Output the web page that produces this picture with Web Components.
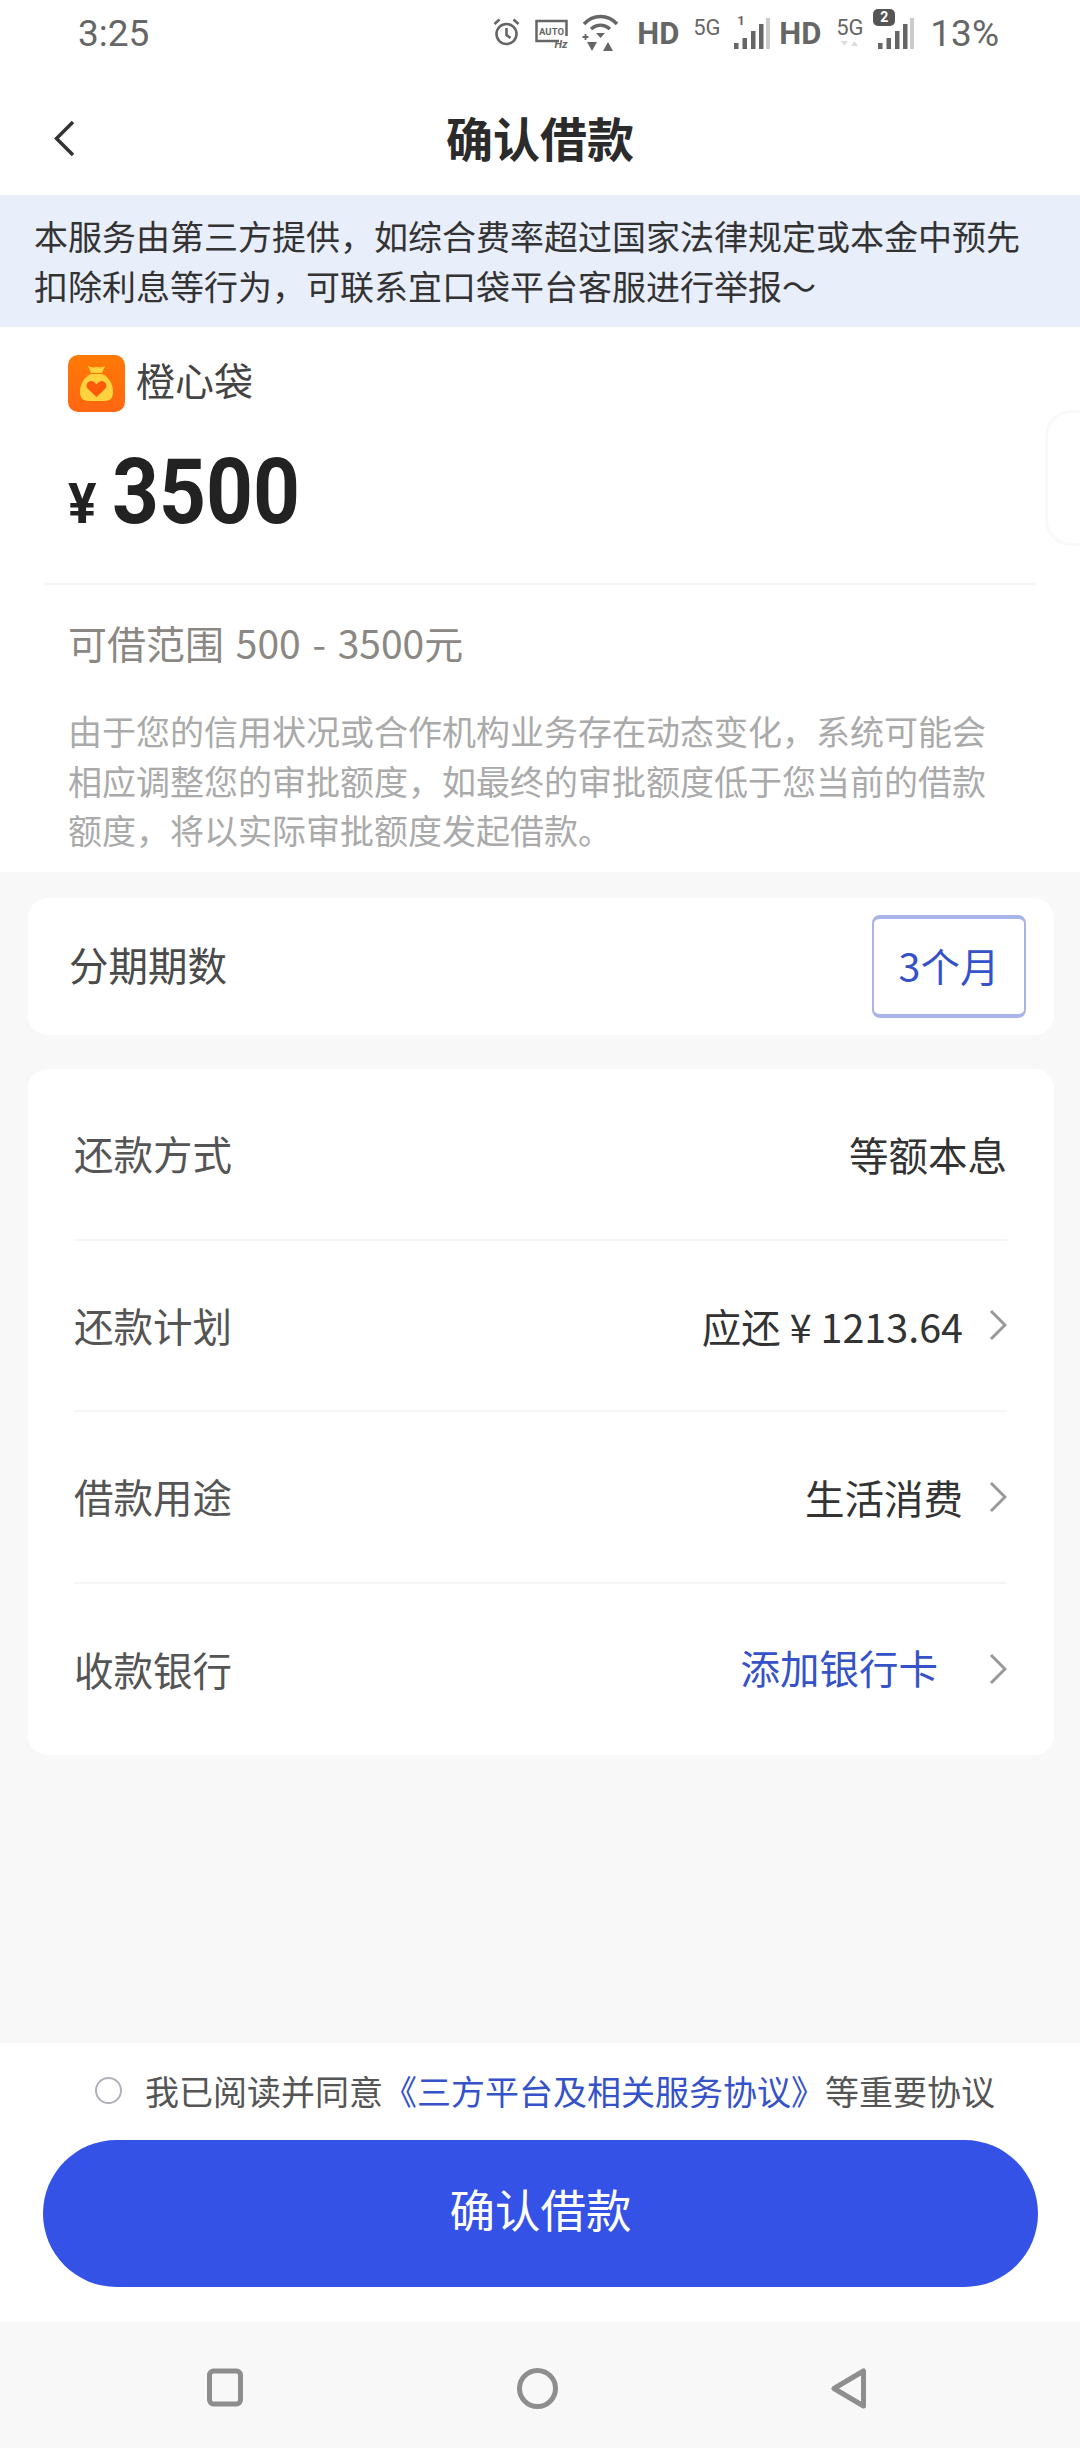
<!DOCTYPE html>
<html lang="zh">
<head>
<meta charset="utf-8">
<style>
  html, body { margin: 0; padding: 0; }
  body {
    width: 1080px;
    height: 2448px;
    overflow: hidden;
    background: #f8f8f8;
    font-family: "Noto Sans CJK SC", "Roboto", sans-serif;
    display: flex;
    flex-direction: column;
  }
</style>
</head>
<body>
  <status-bar></status-bar>
  <title-bar>确认借款</title-bar>
  <notice-bar>本服务由第三方提供，如综合费率超过国家法律规定或本金中预先扣除利息等行为，可联系宜口袋平台客服进行举报～</notice-bar>
  <amount-panel name="橙心袋" amount="3500" range="可借范围 500 - 3500元">由于您的信用状况或合作机构业务存在动态变化，系统可能会相应调整您的审批额度，如最终的审批额度低于您当前的借款额度，将以实际审批额度发起借款。</amount-panel>
  <term-card label="分期期数" value="3个月"></term-card>
  <info-card>
    <info-row label="还款方式" value="等额本息"></info-row>
    <info-row label="还款计划" value="应还 ¥ 1213.64" arrow></info-row>
    <info-row label="借款用途" value="生活消费" arrow></info-row>
    <info-row label="收款银行" value="添加银行卡" arrow link last></info-row>
  </info-card>
  <confirm-footer label="确认借款"></confirm-footer>
  <nav-bar></nav-bar>

<script>
'use strict';

class StatusBar extends HTMLElement {
  constructor() {
    super();
    this.attachShadow({mode: 'open'});
    const bars = `
      <svg width="36" height="31" viewBox="0 0 36 31" fill="#666">
        <rect x="0" y="25" width="4.500" height="6"/>
        <rect x="8.500" y="20" width="4.500" height="11"/>
        <rect x="17" y="13" width="4.500" height="18"/>
        <rect x="25" y="6" width="4.500" height="25"/>
        <rect x="32" y="0" width="4" height="31" fill="#ccc"/>
      </svg>`;
    this.shadowRoot.innerHTML = `
      <style>
        :host {
          display: flex;
          align-items: center;
          height: 80px;
          box-sizing: border-box;
          padding: 0 81px 14px 78px;
          background: #fff;
          color: #666;
          font-family: "Roboto", sans-serif;
        }
        .time { font-size: 37px; flex: 1; }
        .icons { display: flex; align-items: center; }
        .hd { font-size: 31px; font-weight: 700; width: 40px; text-align: center; white-space: nowrap; display: flex; justify-content: center; }
        .g5 { font-size: 22px; width: 27px; display: flex; justify-content: center; margin-top: -12px; position: relative; }
        .pct { font-size: 37px; margin-left: 16px; }
        .sig { position: relative; display: block; width: 36px; height: 31px; }
        .one { position: absolute; left: 3px; top: -4px; font-size: 13px; font-weight: 700; line-height: 13px; }
        .two { position: absolute; left: -5px; top: -9px; width: 22px; height: 17px; border-radius: 5px; background: #555; color: #fff; font-size: 14px; font-weight: 700; text-align: center; line-height: 17px; }
        .arrows { position: absolute; left: 5px; top: 26px; }
        svg { display: block; }
      </style>
      <span class="time">3:25</span>
      <div class="icons">
        <svg style="margin-top:-3px" width="27" height="28" viewBox="0 0 27 28" fill="none" stroke="#666" stroke-width="2.600">
          <circle cx="13.500" cy="16" r="10"/><path d="M13.500 10v7l4 3M1.500 6l5-4.500M25.500 6l-5-4.500"/>
        </svg>
        <svg style="margin-left:15px" width="33" height="36" viewBox="0 0 33 36" fill="none">
          <path d="M24 26H1.500V6h30v15" stroke="#666" stroke-width="2.500"/>
          <text x="16.500" y="19.500" font-family="Roboto" font-size="9.500" font-weight="700" fill="#666" text-anchor="middle">AUTO</text>
          <text x="26" y="33" font-family="Roboto" font-size="11" font-weight="700" font-style="italic" fill="#666" text-anchor="middle">Hz</text>
        </svg>
        <svg style="margin-left:14px" width="37" height="39" viewBox="0 0 37 39" fill="none" stroke="#666">
          <path d="M2 10C11 0 26 0 35 10" stroke-width="3.400"/>
          <path d="M9 15c6-5 13-5 19 0" stroke-width="3.400"/>
          <path d="M14 19h9l-4.500 5z" fill="#666" stroke="none"/>
          <path d="M.5 23h6M3.500 20v6" stroke-width="1.800"/>
          <path d="M5 28h10l-5 9zM21 37h10l-5-9z" fill="#666" stroke="none"/>
        </svg>
        <span class="hd" style="margin-left:19px">HD</span>
        <span class="g5" style="margin-left:15px">5G</span>
        <span class="sig" style="margin-left:14px">${bars}<span class="one">1</span></span>
        <span class="hd" style="margin-left:10px">HD</span>
        <span class="g5" style="margin-left:16px">5G
          <svg class="arrows" width="17" height="5" viewBox="0 0 17 5" fill="#ddd"><path d="M0 0h7L3.500 5zM10 5h7l-3.500-5z"/></svg>
        </span>
        <span class="sig" style="margin-left:15px">${bars}<span class="two">2</span></span>
        <span class="pct">13%</span>
      </div>
    `;
  }
}

class TitleBar extends HTMLElement {
  constructor() {
    super();
    this.attachShadow({mode: 'open'});
    this.shadowRoot.innerHTML = `
      <style>
        :host {
          display: flex;
          align-items: center;
          justify-content: center;
          position: relative;
          height: 115px;
          box-sizing: border-box;
          padding-bottom: 3px;
          background: #fff;
          color: #2b2b2b;
          font-size: 47px;
          font-weight: 700;
        }
        svg { position: absolute; left: 50px; top: 38px; }
      </style>
      <svg width="32" height="42" viewBox="0 0 32 42" fill="none" stroke="#333" stroke-width="3.500">
        <path d="M23 4 6.500 20.500 23 37"/>
      </svg>
      <slot></slot>
    `;
  }
}

class NoticeBar extends HTMLElement {
  constructor() {
    super();
    this.attachShadow({mode: 'open'});
    this.shadowRoot.innerHTML = `
      <style>
        :host {
          display: block;
          height: 132px;
          box-sizing: border-box;
          padding: 16px 34px 0 34px;
          background: #e9eefb;
          color: #333;
          font-size: 34px;
          line-height: 50px;
        }
      </style>
      <slot></slot>
    `;
  }
}

class AmountPanel extends HTMLElement {
  constructor() {
    super();
    this.attachShadow({mode: 'open'});
    this.shadowRoot.innerHTML = `
      <style>
        :host {
          display: block;
          position: relative;
          height: 545px;
          box-sizing: border-box;
          padding: 28px 45px 0 45px;
          background: #fff;
          margin-bottom: 26px;
        }
        .brand { display: flex; gap: 11px; height: 56px; font-size: 39px; line-height: 48px; color: #444; margin-left: 23px; }
        .brand svg { flex: none; }
        .amount { display: flex; align-items: baseline; box-sizing: border-box; padding-top: 6px; margin: 30px 0 0 23px; height: 102px; line-height: 1; color: #222; font-family: "Roboto", sans-serif; font-weight: 700; }
        .yen { display: inline-block; width: 32px; margin-right: 12px; font-size: 56px; transform: scaleX(.95); transform-origin: left; }
        .num { display: inline-block; font-size: 91px; transform: scaleX(.9); transform-origin: left; }
        hr { border: 0; border-top: 2px solid #f4f4f4; margin: 40px 0 0 0; }
        .range { font-size: 39px; word-spacing: 3px; color: #8b8884; margin: 29px 0 0 23px; height: 56px; line-height: 56px; }
        .note { font-size: 34px; line-height: 49.500px; color: #aaa; margin: 36px 30px 0 23px; }
        .peek {
          position: absolute;
          left: 1045px;
          top: 83px;
          width: 60px;
          height: 130px;
          border: 3px solid #f9f9f9;
          border-radius: 26px;
        }
      </style>
      <div class="brand">
        <svg width="57" height="57" viewBox="0 0 57 57">
          <defs><linearGradient id="o" x1="0" y1="0" x2="0" y2="1"><stop offset="0" stop-color="#ff7a06"/><stop offset="1" stop-color="#ff6612"/></linearGradient></defs>
          <rect width="57" height="57" rx="10" fill="url(#o)"/>
          <path d="M20 11c3 1 5 2 8.500 1 3.500 1 5.500 0 8.500-1l-3 7H23z" fill="#ffd23e"/>
          <path d="M23 19h11c7 3 11 10 11 18 0 7-4 9-9 9H21c-5 0-9-2-9-9 0-8 4-15 11-18z" fill="#ffd23e"/>
          <path d="M28.500 42 20 34c-4-4 1-9.500 5-7.500 2 1 3 2 3.500 3 .5-1 1.500-2 3.500-3 4-2 9 3.500 5 7.500z" fill="#ff5a0a"/>
        </svg>
        <span id="name"></span>
      </div>
      <div class="amount"><span class="yen">¥</span><span class="num" id="num"></span></div>
      <hr>
      <div class="range" id="range"></div>
      <div class="note"><slot></slot></div>
      <div class="peek"></div>
    `;
  }
  connectedCallback() {
    this.shadowRoot.getElementById('name').textContent = this.getAttribute('name');
    this.shadowRoot.getElementById('num').textContent = this.getAttribute('amount');
    this.shadowRoot.getElementById('range').textContent = this.getAttribute('range');
  }
}

class TermCard extends HTMLElement {
  constructor() {
    super();
    this.attachShadow({mode: 'open'});
    this.shadowRoot.innerHTML = `
      <style>
        :host {
          display: flex;
          align-items: center;
          justify-content: space-between;
          height: 137px;
          box-sizing: border-box;
          margin: 0 26px 34px 28px;
          padding: 0 28px 0 41px;
          background: #fff;
          border-radius: 20px;
          font-size: 39.500px;
          color: #4a4a4a;
        }
        #label { margin-top: -6px; }
        .chip {
          display: flex;
          align-items: center;
          justify-content: center;
          width: 154px;
          height: 103px;
          box-sizing: border-box;
          padding-bottom: 5px;
          border: solid #a9b5ea;
          border-width: 4px 2px;
          border-radius: 8px;
          color: #3552c8;
        }
      </style>
      <span id="label"></span>
      <span class="chip" id="value"></span>
    `;
  }
  connectedCallback() {
    this.shadowRoot.getElementById('label').textContent = this.getAttribute('label');
    this.shadowRoot.getElementById('value').textContent = this.getAttribute('value');
  }
}

class InfoCard extends HTMLElement {
  constructor() {
    super();
    this.attachShadow({mode: 'open'});
    this.shadowRoot.innerHTML = `
      <style>
        :host {
          display: block;
          margin: 0 26px 0 28px;
          padding: 0 47px 0 46px;
          background: #fff;
          border-radius: 20px;
        }
      </style>
      <slot></slot>
    `;
  }
}

class InfoRow extends HTMLElement {
  constructor() {
    super();
    this.attachShadow({mode: 'open'});
    this.shadowRoot.innerHTML = `
      <style>
        :host {
          display: flex;
          align-items: center;
          height: 171.500px;
          box-sizing: border-box;
          border-bottom: 2px solid #f5f5f5;
          font-size: 39.500px;
          color: #333;
        }
        :host([last]) { border-bottom: 0; }
        :host([link]) .value { color: #3552c8; margin-bottom: 6px; }
        .label { flex: 1; color: #555; margin-bottom: 2px; }
        svg { margin-left: 26px; display: none; }
        :host([arrow]) svg { display: block; }
        :host([link]) svg { margin-left: 51px; }
      </style>
      <span class="label" id="label"></span>
      <span class="value" id="value"></span>
      <svg width="18" height="32" viewBox="0 0 18 32" fill="none" stroke="#999" stroke-width="3">
        <path d="M2 2l14 14L2 30"/>
      </svg>
    `;
  }
  connectedCallback() {
    this.shadowRoot.getElementById('label').textContent = this.getAttribute('label');
    this.shadowRoot.getElementById('value').textContent = this.getAttribute('value');
  }
}

class ConfirmFooter extends HTMLElement {
  constructor() {
    super();
    this.attachShadow({mode: 'open'});
    this.shadowRoot.innerHTML = `
      <style>
        :host {
          display: block;
          margin-top: auto;
          height: 279px;
          box-sizing: border-box;
          padding: 20px 42px 0 43px;
          background: #fff;
        }
        .agree {
          display: flex;
          align-items: center;
          justify-content: center;
          height: 54px;
          padding-left: 9px;
          font-size: 34px;
          color: #555;
          white-space: nowrap;
        }
        .dot {
          flex: none;
          width: 27px;
          height: 27px;
          box-sizing: border-box;
          border: 2px solid #b0b0bc;
          border-radius: 50%;
          margin-right: 23px;
        }
        a { color: #3552c8; }
        button {
          display: block;
          width: 100%;
          height: 147px;
          margin-top: 23px;
          padding: 0 0 12px;
          border: 0;
          border-radius: 74px;
          background: #3552e6;
          color: #fff;
          font: inherit;
          font-size: 45.500px;
        }
      </style>
      <div class="agree"><span class="dot"></span><span>我已阅读并同意<a>《三方平台及相关服务协议》</a>等重要协议</span></div>
      <button id="btn"></button>
    `;
  }
  connectedCallback() {
    this.shadowRoot.getElementById('btn').textContent = this.getAttribute('label');
  }
}

class NavBar extends HTMLElement {
  constructor() {
    super();
    this.attachShadow({mode: 'open'});
    this.shadowRoot.innerHTML = `
      <style>
        :host {
          display: block;
          height: 126px;
          background: #f8f8f8;
          position: relative;
        }
        svg { position: absolute; top: 46px; }
      </style>
      <svg style="left:207px" width="36" height="39" viewBox="0 0 36 39" fill="none" stroke="#8e8e8e" stroke-width="5">
        <rect x="2.500" y="3" width="31" height="33" rx="4"/>
      </svg>
      <svg style="left:517px" width="41" height="41" viewBox="0 0 41 41" fill="none" stroke="#8e8e8e" stroke-width="5">
        <circle cx="20.500" cy="20.500" r="18"/>
      </svg>
      <svg style="left:831px" width="36" height="41" viewBox="0 0 36 41" fill="none" stroke="#8e8e8e" stroke-width="5" stroke-linejoin="round">
        <path d="M32.500 3v35L3 20.500z"/>
      </svg>
    `;
  }
}

customElements.define('status-bar', StatusBar);
customElements.define('title-bar', TitleBar);
customElements.define('notice-bar', NoticeBar);
customElements.define('amount-panel', AmountPanel);
customElements.define('term-card', TermCard);
customElements.define('info-card', InfoCard);
customElements.define('info-row', InfoRow);
customElements.define('confirm-footer', ConfirmFooter);
customElements.define('nav-bar', NavBar);
</script>
</body>
</html>
